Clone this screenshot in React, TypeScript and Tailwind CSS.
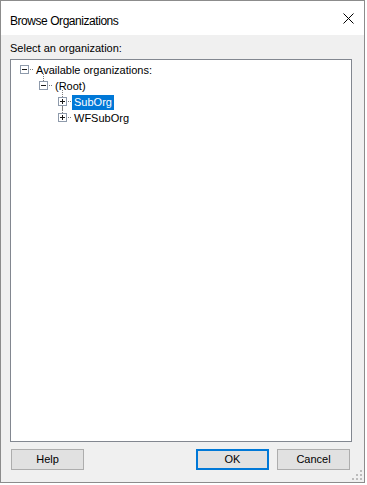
import React from "react";

type Node = {
  level: number;
  label: string;
  expanded: boolean;
  lineAbove: boolean;
  lineBelow: boolean;
  selected?: boolean;
};

const rows: Node[] = [
  { level: 0, label: "Available organizations:", expanded: true, lineAbove: false, lineBelow: false },
  { level: 1, label: "(Root)", expanded: true, lineAbove: true, lineBelow: false },
  { level: 2, label: "SubOrg", expanded: false, lineAbove: true, lineBelow: true, selected: true },
  { level: 2, label: "WFSubOrg", expanded: false, lineAbove: true, lineBelow: false },
];

const indent = ["pl-[5px]", "pl-[24px]", "pl-[43px]"];

function Glyph({ n }: { n: Node }) {
  const dot = "#7c7c7c";
  return (
    <svg width="18" height="16" className="shrink-0 overflow-visible" viewBox="0 0 18 16">
      {n.lineAbove && (
        <>
          <rect x="8" y="-4" width="1" height="1" fill={dot} />
          <rect x="8" y="-2" width="1" height="1" fill={dot} />
          <rect x="8" y="0" width="1" height="1" fill={dot} />
          <rect x="8" y="2" width="1" height="1" fill={dot} />
        </>
      )}
      {n.lineBelow && (
        <>
          <rect x="8" y="13" width="1" height="1" fill={dot} />
          <rect x="8" y="15" width="1" height="1" fill={dot} />
        </>
      )}
      <rect x="4.5" y="3.5" width="8" height="8" fill="#ffffff" stroke="#8e9aab" strokeWidth="1" />
      <rect x="6" y="7" width="5" height="1" fill="#1a1a1a" />
      {!n.expanded && <rect x="8" y="5" width="1" height="5" fill="#1a1a1a" />}
      <rect x="14" y="7" width="1" height="1" fill={dot} />
      <rect x="16" y="7" width="1" height="1" fill={dot} />
    </svg>
  );
}

function Btn({ label, primary }: { label: string; primary?: boolean }) {
  return (
    <div
      className={
        primary
          ? "w-[73px] h-[21px] flex items-center justify-center bg-[#e1e1e1] border-2 border-[#0078d7] text-[11px] text-black"
          : "w-[73px] h-[21px] flex items-center justify-center bg-[#e1e1e1] border border-[#adadad] text-[11px] text-black"
      }
    >
      {label}
    </div>
  );
}

export default function App() {
  return (
    <div className="w-[367px] h-[485px] bg-white font-['Liberation_Sans',Arial,sans-serif]">
      <div className="relative w-[365px] h-[483px] border border-[#8c8c8c] flex flex-col">
        <div className="h-[34px] bg-white flex items-start justify-between">
          <div className="pl-[9px] pt-[13px] text-[12px] leading-[14px] tracking-[-0.45px] text-black">
            Browse Organizations
          </div>
          <div className="pt-[12px] pr-[10px]">
            <svg width="11" height="11" viewBox="0 0 11 11">
              <path d="M0.5 0.5 L10.5 10.5 M10.5 0.5 L0.5 10.5" stroke="#000" strokeWidth="1" />
            </svg>
          </div>
        </div>
        <div className="flex-1 bg-[#f0f0f0] flex flex-col pl-[9px]">
          <div className="pt-[7px] text-[11px] leading-[13px] text-black">Select an organization:</div>
          <div className="mt-[4px] w-[342px] h-[383px] bg-white border border-[#828790] pt-[2px]">
            {rows.map((n) => (
              <div key={n.label} className={"flex items-center h-[16px] " + indent[n.level]}>
                <Glyph n={n} />
                <span
                  className={
                    n.selected
                      ? "px-[2px] h-[15px] leading-[15px] text-[11px] bg-[#0078d7] text-white"
                      : "px-[2px] h-[15px] leading-[15px] text-[11px] text-black"
                  }
                >
                  {n.label}
                </span>
              </div>
            ))}
          </div>
          <div className="mt-[7px] flex items-center pl-[1px] pr-[14px]">
            <Btn label="Help" />
            <div className="ml-auto flex gap-[8px]">
              <Btn label="OK" primary />
              <Btn label="Cancel" />
            </div>
          </div>
        </div>
        <svg className="absolute right-[2px] bottom-[2px]" width="10" height="10" viewBox="0 0 10 10">
          <rect x="8" y="0" width="2" height="2" fill="#bcbcbc" />
          <rect x="4" y="4" width="2" height="2" fill="#bcbcbc" />
          <rect x="8" y="4" width="2" height="2" fill="#bcbcbc" />
          <rect x="0" y="8" width="2" height="2" fill="#bcbcbc" />
          <rect x="4" y="8" width="2" height="2" fill="#bcbcbc" />
          <rect x="8" y="8" width="2" height="2" fill="#bcbcbc" />
        </svg>
      </div>
    </div>
  );
}
